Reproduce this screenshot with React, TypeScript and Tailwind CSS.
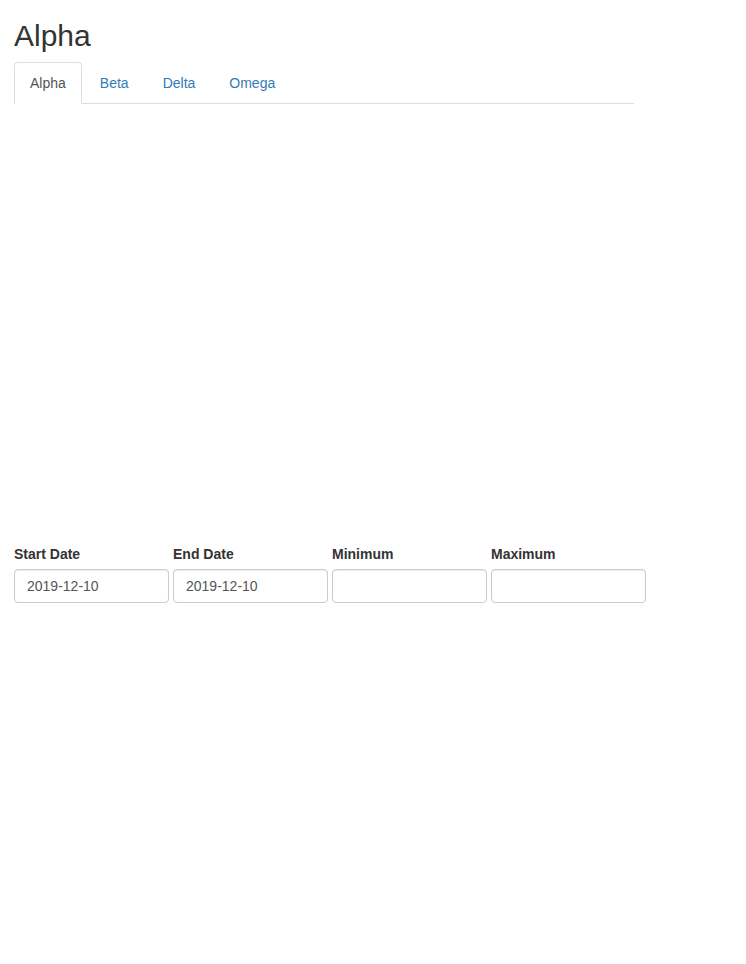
import React from "react";

const font = { fontFamily: '"Liberation Sans", Arial, Helvetica, sans-serif' };

export default function App() {
  const tabs = ["Alpha", "Beta", "Delta", "Omega"];
  const fields = [
    { label: "Start Date", value: "2019-12-10" },
    { label: "End Date", value: "2019-12-10" },
    { label: "Minimum", value: "" },
    { label: "Maximum", value: "" },
  ];
  return (
    <div className="min-h-[964px] bg-white text-[#333] text-[14px] leading-[20px] px-[14px]" style={font}>
      <h2 className="text-[30px] leading-[33px] font-normal pt-[19px] mb-[10px] text-[#333]">Alpha</h2>
      <div className="w-[620px] flex border-b border-[#ddd]">
        {tabs.map((t, i) => (
          <div
            key={t}
            className={
              i === 0
                ? "mr-[2px] -mb-px px-[15px] py-[10px] border border-[#ddd] border-b-transparent rounded-t-[4px] bg-white text-[#555]"
                : "mr-[2px] -mb-px px-[15px] py-[10px] border border-transparent text-[#337ab7]"
            }
          >
            {t}
          </div>
        ))}
      </div>
      <div className="h-[440px]" />
      <div className="flex gap-[4px]">
        {fields.map((f) => (
          <div key={f.label} className="w-[155px] flex flex-col">
            <label className="font-bold mb-[5px] text-[#333]">{f.label}</label>
            <input
              readOnly
              value={f.value}
              className="h-[34px] w-[155px] px-[12px] py-[6px] border border-[#ccc] rounded-[4px] text-[#555] text-[14px] shadow-[inset_0_1px_1px_rgba(0,0,0,0.075)] outline-none"
              style={font}
            />
          </div>
        ))}
      </div>
    </div>
  );
}
